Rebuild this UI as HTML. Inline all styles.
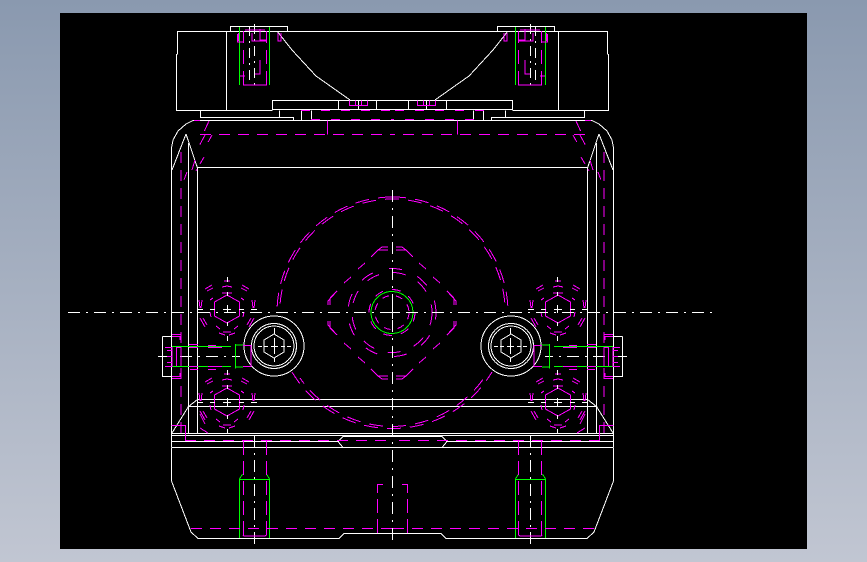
<!DOCTYPE html>
<html><head><meta charset="utf-8"><style>
html,body{margin:0;padding:0;width:867px;height:562px;overflow:hidden;background:linear-gradient(#8a99af,#c1c6d2)}
svg{position:absolute;left:0;top:0;display:block}
</style></head><body>
<svg width="867" height="562" viewBox="0 0 867 562" xmlns="http://www.w3.org/2000/svg" shape-rendering="crispEdges">
<rect x="60" y="13" width="747" height="536" fill="#000"/>
<defs>
<g id="fq" fill="none" stroke="#f0f">
 <path d="M-3 -28H3M-5 -16H0M-22 -20L-15 -24M-20 -18L-14 -21M-5 -22L0 -23M-28 -9L-27 -1M-25 -9L-26 -1M-17 -9L-14 -11M-27 9L-22 18M-24 9L-20 16M-17 3L-16 8M-11 17L-7 20M-4 23H0M-8 24L-2 26"/>
</g>
<g id="fast" fill="none">
 <use href="#fq"/><use href="#fq" transform="scale(-1 1)"/>
 <polygon stroke="#f0f" points="0,-14 12.500,-7 12.500,7 0,14 -12.500,7 -12.500,-7"/>
 <path stroke="#fff" d="M-30 0.500H-24M-17 0.500H-12M-4 0.500H4M12 0.500H17M24 0.500H30M0.500 -32V-27M0.500 -17V-13M0.500 -4V4M0.500 13V17M0.500 27V32"/>
</g>
<g id="half" fill="none" stroke-width="1">
 <g stroke="#fff">
  <path d="M392.500 31.500H177.500V54L176.500 54.500V110.500H272.500M226.500 31.500V110.500"/>
  <path d="M230.500 31V26.500H287.500V31"/>
  <path d="M200.500 110.500V117.500H279.500V110.500M279.500 117.500H293.500V120.500M272.500 110V100.500H392.500M272.500 109.500H392.500M301.500 110.500V120.500M311.500 110.500V120.500"/>
  <path d="M277 31L292 50L316 76L350 100"/>
  <path d="M338.500 100.500V109.500M358.500 100.500V109.500M376.500 100.500V109.500"/>
  <path d="M392.500 120.500H193L186 124L178 131L173 140L171.500 148V447"/>
  <path d="M186 134L172 170M186 134L197.500 168M188.500 143V433"/>
  <path d="M392.500 167.500H197.500V433"/>
  <path d="M392.500 399.500H197.500L188.500 406.500H392.500M188.500 406.500L172 433"/>
  <path d="M171.500 433.500H392.500M171.500 435.500H392.500"/>
  <path d="M171.500 441.500H338L343 447.500H392.500M338 441.500L343 436.500H392.500M171.500 447.500H343M171.500 447.500V481L191 532L198 538.500H339L344 533.500H392.500"/>
  <path d="M162.500 336.500H171.500M162.500 336.500V376.500H171.500"/>
  <path d="M158 356.500H172"/>
  <path d="M180 356.500H240" stroke-dasharray="12 6 2 6"/>
  <circle cx="274" cy="346" r="30"/>
  <circle cx="274" cy="346" r="22.500"/>
  <circle cx="274" cy="346" r="20"/>
  <polygon points="274,334 284,340 284,352 274,358 264,352 264,340"/>
  <path d="M274.500 328V334M274.500 338V354M274.500 358V362M258 346.500H262M264 346.500H268M271 346.500H278M281 346.500H285M287 346.500H291"/>
  <path d="M249.500 26V85M254.500 24V85" stroke-dasharray="10 5 2 5"/>
  <path d="M254.500 436V548" stroke-dasharray="12 5 2 5"/>
 </g>
 <g stroke="#0f0">
  <path d="M239.500 27V85M269.500 27V85"/>
  <path d="M172 346.500H231M172 366.500H231"/>
  <path d="M235.500 344V368.500M235.500 345H243M235.500 367H243"/>
  <path d="M239.500 538V479.500H269.500V538M239.500 479L242.500 474M269.500 479L266.500 474"/>
 </g>
 <g stroke="#f0f">
  <path d="M238.500 33V41M243.500 85V31M266.500 85V31" stroke-dasharray="14 7"/>
  <path d="M237.500 34V42H243.500M245 30H265M252 33V41H267M260 29V40H267M278 33V41H281V33M243 85H267M240 76H245M255 74H260V60"/>
  <path d="M349.500 100.500V105.500H367.500V100.500M355.500 105V100.500M361.500 105V100.500"/>
  <path d="M301 110.500H392.500" stroke-dasharray="9 11"/>
  <path d="M311 119.500H392.500" stroke-dasharray="9 11"/>
  <path d="M327.500 120.500V134.500"/>
  <path d="M200 134.500H392.500" stroke-dasharray="11 8"/>
  <path d="M194 120.500H200M209 121L203 134M205 135L198 148M195 160L192 170M181 152V433" stroke-dasharray="11 7"/>
  <path d="M212 135L206 146M204 157L196 171M187 172L184 180" stroke-dasharray="8 6"/>
  <path d="M185 440.500H392.500" stroke-dasharray="11 8"/>
  <path d="M191 528.500H392.500" stroke-dasharray="11 8"/>
  <path d="M243.500 441V538M266.500 441V538" stroke-dasharray="14 6"/>
  <path d="M243 535L244 536H265L266.500 535"/>
  <path d="M377.500 533V484.500H387" stroke-dasharray="14 6"/>
  <path d="M171.500 425.500H185.500V441"/>
  <path d="M172 336.500H180V340M172 376.500H180V373M172 334.500H181V336M172 378.500H181"/>
  <path d="M165 347.500H172V366.500H165M167 350.500H172M167 356.500H172M167 362.500H172M176.500 347V366M176 347.500H181V366"/>
  <path d="M189 344.500H198M189 347.500H198M189 366.500H198M190 369.500H198"/>
  <path d="M208 345.500H216M208 347.500H222M208 366.500H222M208 369.500H216"/>
  <path d="M243 345.500H251V366.500H243"/>
  <path d="M200 414L205 424M200 428L208 433"/>
 </g>
 <use href="#fast" x="227" y="309"/>
 <use href="#fast" x="227" y="402"/>
</g>
<g id="dq" fill="none" stroke="#f0f">
 <path d="M371 257L378 250L382 247H388M378 250H388M358 269L365 263M344 283L351 277M330 298L337 291L328 301V305M330 298V305"/>
</g>
<g id="dh">
 <use href="#dq"/>
 <use href="#dq" transform="translate(784 0) scale(-1 1)"/>
</g>
<g id="center" fill="none">
 <g stroke="#f0f">
  <path d="M392 197A115.500 115.500 0 0 0 277 313" stroke-dasharray="14 9"/>
  <path d="M392 199A113.500 113.500 0 0 0 280 305" stroke-dasharray="14 9" stroke-dashoffset="7"/>
  <path d="M392 197A115.500 115.500 0 0 1 508 313" stroke-dasharray="14 9"/>
  <path d="M392 199A113.500 113.500 0 0 1 505 305" stroke-dasharray="14 9" stroke-dashoffset="7"/>
  <path d="M292 372A115.500 115.500 0 0 0 392 428.500A115.500 115.500 0 0 0 492 372" stroke-dasharray="14 9"/>
  <path d="M300 378A113.500 113.500 0 0 0 392 426.500A113.500 113.500 0 0 0 484 378" stroke-dasharray="14 9" stroke-dashoffset="7"/>
  <circle cx="392" cy="312.500" r="40" stroke-dasharray="13 14"/>
  <circle cx="392" cy="312.500" r="44" stroke-dasharray="13 17" stroke-dashoffset="6"/>
  <circle cx="392" cy="312.500" r="23" stroke-dasharray="9 9"/>
  <circle cx="392" cy="312.500" r="17" stroke-dasharray="7 7"/>
 </g>
 <use href="#dh"/>
 <use href="#dh" transform="translate(0 626) scale(1 -1)"/>
 <circle cx="392" cy="312.500" r="21" stroke="#0f0"/>
 <path stroke="#fff" d="M392.500 190V540" stroke-dasharray="12 6 2 6"/>
 <path stroke="#fff" d="M68 312.500H718" stroke-dasharray="12 6 2 6"/>
 <path stroke="#fff" d="M385 312.500H399M392.500 306V319"/>
</g>
</defs>
<use href="#half"/>
<use href="#half" transform="translate(785 0) scale(-1 1)"/>
<use href="#center"/>
</svg>
</body></html>
